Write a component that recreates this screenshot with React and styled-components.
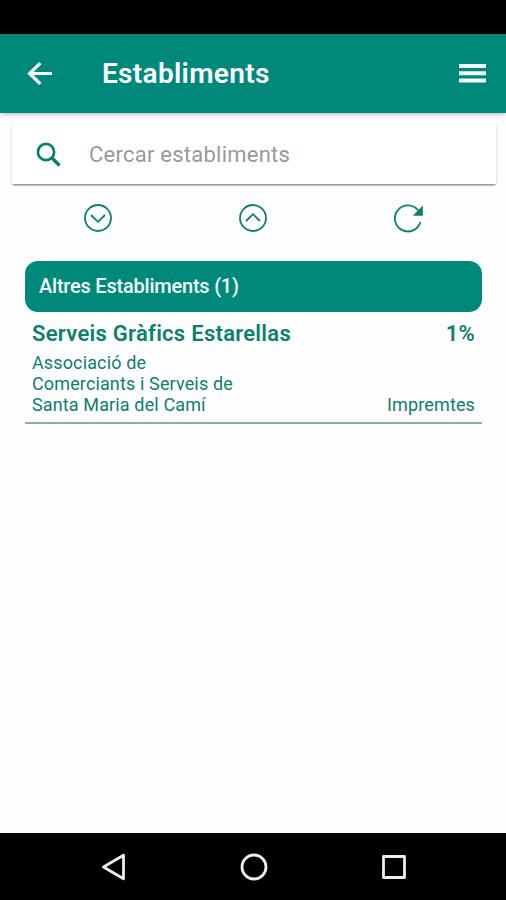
import React, { useState } from "react";
import styled, { createGlobalStyle } from "styled-components";

const TEAL = "#00897b";
const DARK_TEAL = "#0b806b";

const GlobalStyle = createGlobalStyle`
  * {
    box-sizing: border-box;
  }
  body {
    margin: 0;
    background: #fff;
    font-family: Roboto, "Liberation Sans", sans-serif;
  }
`;

const Screen = styled.div`
  display: flex;
  flex-direction: column;
  height: 900px;
  width: 506px;
  overflow: hidden;
  background: #fefefe;
`;

const StatusBar = styled.div`
  flex: none;
  height: 34px;
  background: #000;
`;

const Header = styled.header`
  flex: none;
  display: flex;
  align-items: center;
  height: 79px;
  padding: 0 20px 0 27px;
  background: ${TEAL};
  box-shadow: 0 1px 5px rgba(0, 0, 0, 0.3);
`;

const Title = styled.h1`
  flex: 1;
  margin: 0 0 0 50px;
  color: #fff;
  font-size: 28px;
  font-weight: 600;
  line-height: 34px;
  letter-spacing: 0.32px;
`;

const IconButton = styled.button`
  display: flex;
  padding: 0;
  border: none;
  background: none;
  color: ${(props) => props.$color || DARK_TEAL};
`;

const SearchCard = styled.label`
  flex: none;
  display: flex;
  align-items: center;
  height: 60px;
  margin: 11px 10px 0 12px;
  padding-left: 24px;
  background: #fff;
  color: ${DARK_TEAL};
  box-shadow: 0 2px 2px -1px rgba(0, 0, 0, 0.5), 0 1px 3px rgba(0, 0, 0, 0.14);
`;

const SearchInput = styled.input`
  flex: 1;
  min-width: 0;
  margin-left: 28px;
  padding: 0;
  border: none;
  outline: none;
  background: none;
  font-family: inherit;
  font-size: 22px;
  letter-spacing: 0.24px;
  &::placeholder {
    color: #999;
    opacity: 1;
  }
`;

const Actions = styled.div`
  flex: none;
  display: grid;
  grid-template-columns: repeat(3, 155px);
  justify-content: center;
  justify-items: center;
  align-items: center;
  height: 68px;
`;

const List = styled.main`
  flex: 1;
  padding: 9px 24px 0 25px;
`;

const GroupHeader = styled.h2`
  display: flex;
  align-items: center;
  height: 51px;
  margin: 0;
  padding: 0 14px 1px;
  border-radius: 13px;
  background: ${TEAL};
  color: #f2fffc;
  font-size: 20px;
  font-weight: 500;
  letter-spacing: -0.22px;
`;

const Item = styled.article`
  padding: 8px 7px 7px;
  border-bottom: 2px solid #87b0a7;
  color: ${DARK_TEAL};
`;

const ItemRow = styled.div`
  display: flex;
  justify-content: space-between;
  align-items: flex-end;
`;

const ItemName = styled.strong`
  font-size: 22px;
  font-weight: 600;
  line-height: 27px;
  letter-spacing: 0.28px;
`;

const Detail = styled.p`
  width: ${(props) => props.$width || "auto"};
  margin: 5px 0 0;
  font-size: 18px;
  line-height: 21px;
  letter-spacing: 0.13px;
`;

const NavBar = styled.nav`
  flex: none;
  display: grid;
  grid-template-columns: repeat(3, 140px);
  justify-content: center;
  justify-items: center;
  align-items: center;
  height: 67px;
  padding-left: 1px;
  background: #000;
`;

const BackArrow = () => (
  <svg width="25" height="23" viewBox="0 0 25 23" fill="none" stroke="currentColor" strokeWidth="3.2">
    <path d="M25 11.5H2.8M13.3 1.1L2.6 11.5l10.7 10.4" />
  </svg>
);

const MenuIcon = () => (
  <svg width="27" height="19" viewBox="0 0 27 19" fill="currentColor">
    <path d="M0 0h27v4H0zM0 7.3h27v4H0zM0 14.6h27v4H0z" />
  </svg>
);

const SearchIcon = () => (
  <svg width="25" height="25" viewBox="0 0 25 25" fill="none" stroke="currentColor" strokeWidth="2.7">
    <circle cx="10" cy="10" r="8.1" />
    <path d="M15.5 15.5l8 8" strokeWidth="3.3" />
  </svg>
);

const ChevronCircle = ({ up }) => (
  <svg width="30" height="30" viewBox="0 0 30 30" fill="none" stroke="currentColor" strokeWidth="1.8">
    <circle cx="15" cy="15" r="13" />
    <path d={up ? "M8 18l7-6.8 7 6.8" : "M8 12l7 6.8 7-6.8"} />
  </svg>
);

const RefreshIcon = () => (
  <svg width="30" height="30" viewBox="0 0 30 30" fill="none">
    <path d="M25.2 7.5A13 13 0 1 0 27.4 19" stroke="currentColor" strokeWidth="1.8" />
    <path d="M29.8 2.6v10.2H19.8z" fill="currentColor" />
  </svg>
);

const NavIcon = styled.svg.attrs({
  width: 30,
  height: 30,
  viewBox: "0 0 30 30",
  fill: "none",
  stroke: "#eee",
  strokeWidth: 2.8,
  strokeLinejoin: "round",
})``;

const groups = [
  {
    name: "Altres Establiments",
    items: [
      {
        name: "Serveis Gràfics Estarellas",
        discount: "1%",
        association: "Associació de Comerciants i Serveis de Santa Maria del Camí",
        category: "Impremtes",
      },
    ],
  },
];

function App() {
  const [search, setSearch] = useState("");

  return (
    <Screen>
      <GlobalStyle />
      <StatusBar />
      <Header>
        <IconButton $color="#fff" aria-label="Enrere">
          <BackArrow />
        </IconButton>
        <Title>Establiments</Title>
        <IconButton $color="#f4fffd" aria-label="Menú">
          <MenuIcon />
        </IconButton>
      </Header>
      <SearchCard>
        <SearchIcon />
        <SearchInput
          placeholder="Cercar establiments"
          value={search}
          onChange={(e) => setSearch(e.target.value)}
        />
      </SearchCard>
      <Actions>
        <IconButton aria-label="Desplegar">
          <ChevronCircle />
        </IconButton>
        <IconButton aria-label="Plegar">
          <ChevronCircle up />
        </IconButton>
        <IconButton aria-label="Actualitzar">
          <RefreshIcon />
        </IconButton>
      </Actions>
      <List>
        {groups.map((group) => (
          <section key={group.name}>
            <GroupHeader>{`${group.name} (${group.items.length})`}</GroupHeader>
            {group.items.map((item) => (
              <Item key={item.name}>
                <ItemRow>
                  <ItemName>{item.name}</ItemName>
                  <ItemName>{item.discount}</ItemName>
                </ItemRow>
                <ItemRow>
                  <Detail $width="215px">{item.association}</Detail>
                  <Detail>{item.category}</Detail>
                </ItemRow>
              </Item>
            ))}
          </section>
        ))}
      </List>
      <NavBar>
        <NavIcon>
          <path d="M24.5 3.2v23.6L4.5 15z" />
        </NavIcon>
        <NavIcon>
          <circle cx="15" cy="15" r="12" />
        </NavIcon>
        <NavIcon>
          <rect x="4.5" y="4.5" width="21" height="21" />
        </NavIcon>
      </NavBar>
    </Screen>
  );
}

export default App;
